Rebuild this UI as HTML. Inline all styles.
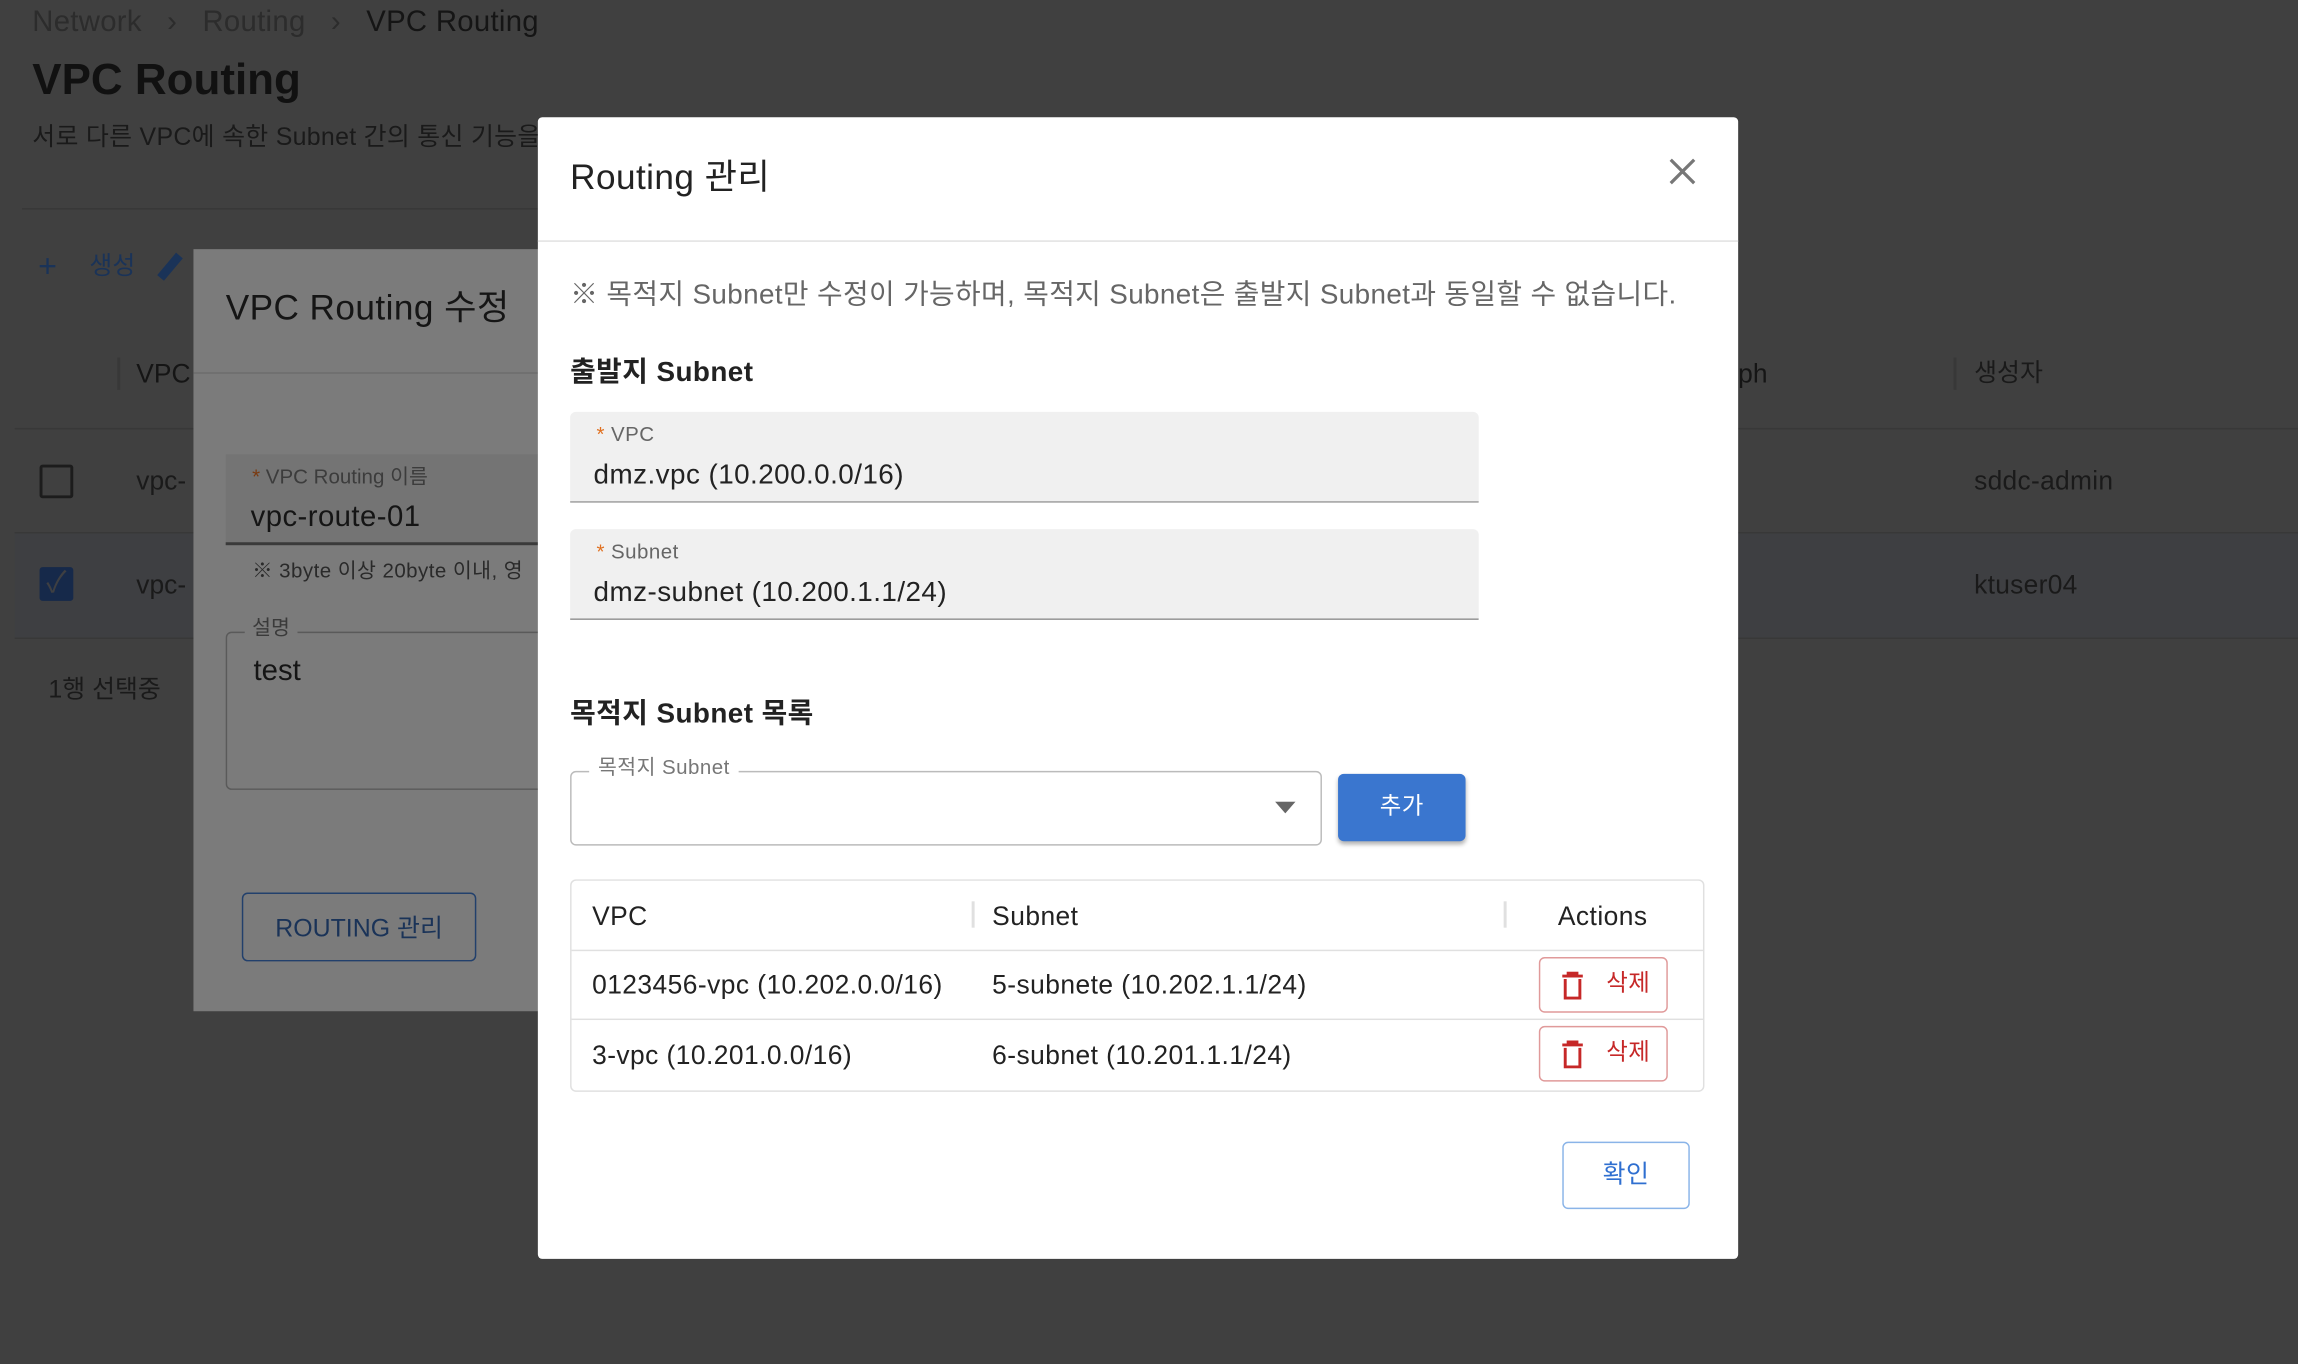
<!DOCTYPE html>
<html><head><meta charset="utf-8"><style>
html,body{margin:0;padding:0;width:2298px;height:1364px;overflow:hidden;background:#404040;}
#s{position:absolute;left:0;top:0;width:1568px;height:931px;transform:scale(1.46556);transform-origin:0 0;font-family:"Liberation Sans","Noto Sans CJK KR",sans-serif;}
.a{position:absolute;white-space:nowrap;line-height:1;}
.m .a{letter-spacing:0.3px;}
</style></head><body><div id="s">
<!-- background page -->
<div class="a" style="left:22px;top:5px;font-size:20px;color:#2c2c2c;letter-spacing:0.2px">Network &nbsp;&nbsp;›&nbsp;&nbsp; Routing &nbsp;&nbsp;›&nbsp;&nbsp; <span style="color:#151515">VPC Routing</span></div>
<div class="a" style="left:22px;top:40px;font-size:30px;font-weight:bold;color:#111">VPC Routing</div>
<div class="a" style="left:22px;top:85px;font-size:17px;color:#1a1a1a;letter-spacing:0.2px">서로 다른 VPC에 속한 Subnet 간의 통신 기능을</div>
<div class="a" style="left:15px;top:142px;width:360px;height:1px;background:#383838"></div>
<div class="a" style="left:26px;top:171px;font-size:22px;color:#1a3358">+</div>
<div class="a" style="left:61px;top:173px;font-size:17px;color:#1a3358">생성</div>
<div class="a" style="left:80px;top:244px;width:2px;height:22px;background:#383838"></div>
<div class="a" style="left:93px;top:246px;font-size:18px;color:#151515">VPC</div>
<div class="a" style="left:1186px;top:246px;font-size:18px;color:#151515">ph</div>
<div class="a" style="left:1333px;top:244px;width:2px;height:22px;background:#383838"></div>
<div class="a" style="left:1347px;top:246px;font-size:17px;color:#1a1a1a">생성자</div>
<div class="a" style="left:10px;top:292px;width:1558px;height:1px;background:#383838"></div>
<div class="a" style="left:10px;top:363px;width:1558px;height:72px;background:#3e3f42"></div>
<div class="a" style="left:10px;top:363px;width:1558px;height:1px;background:#383838"></div>
<div class="a" style="left:10px;top:435px;width:1558px;height:1px;background:#383838"></div>
<div class="a" style="left:27px;top:317px;width:19px;height:19px;border:2px solid #1c1c1c;border-radius:2px"></div>
<div class="a" style="left:27px;top:387px;width:23px;height:23px;background:#16294a;border-radius:2px;color:#3e3f42;font-size:20px;text-align:center;line-height:23px">✓</div>
<div class="a" style="left:93px;top:319px;font-size:18px;color:#1a1a1a">vpc-</div>
<div class="a" style="left:93px;top:390px;font-size:18px;color:#1a1a1a">vpc-</div>
<div class="a" style="left:1347px;top:319px;font-size:18px;color:#1a1a1a;letter-spacing:0.2px">sddc-admin</div>
<div class="a" style="left:1347px;top:390px;font-size:18px;color:#1a1a1a;letter-spacing:0.2px">ktuser04</div>
<div class="a" style="left:33px;top:462px;font-size:17px;color:#1a1a1a">1행 선택중</div>
<div class="a" style="left:113px;top:172px;width:6px;height:20px;background:#1a3358;transform:rotate(40deg)"></div>
<!-- middle dialog -->
<div class="a" style="left:132px;top:170px;width:260px;height:520px;background:#7b7b7b"></div>
<div class="a" style="left:154px;top:199px;font-size:24px;color:#151515;letter-spacing:0.3px">VPC Routing 수정</div>
<div class="a" style="left:132px;top:254px;width:240px;height:1px;background:#6c6c6c"></div>
<div class="a" style="left:154px;top:310px;width:220px;height:60px;background:#747474;border-bottom:2px solid #3a3a3a"></div>
<div class="a" style="left:172px;top:318px;font-size:14px;color:#3c3c3c"><span style="color:#7a3a10">*</span> VPC Routing 이름</div>
<div class="a" style="left:171px;top:343px;font-size:20px;color:#151515;letter-spacing:0.3px">vpc-route-01</div>
<div class="a" style="left:172px;top:382px;font-size:14px;color:#2a2a2a;letter-spacing:0.3px">※ 3byte 이상 20byte 이내, 영</div>
<div class="a" style="left:154px;top:431px;width:220px;height:106px;border:1px solid #5a5a5a;border-radius:4px"></div>
<div class="a" style="left:167px;top:421px;font-size:14px;color:#3a3a3a;background:#7b7b7b;padding:0 5px">설명</div>
<div class="a" style="left:173px;top:448px;font-size:20px;color:#151515">test</div>
<div class="a" style="left:165px;top:609px;border:1px solid #22406c;border-radius:4px;box-sizing:border-box;width:160px;height:47px;font-size:17px;color:#1a3358;text-align:center;line-height:47px">ROUTING 관리</div>
<!-- modal -->
<div class="a m" style="left:367px;top:80px;width:819px;height:779px;background:#fff;border-radius:3px">
 <div class="a" style="left:22px;top:30px;font-size:24px;color:#222">Routing 관리</div>
 <svg class="a" style="left:771px;top:27px" width="20" height="20" viewBox="0 0 20 20"><path d="M2 2L18 18M18 2L2 18" stroke="#777" stroke-width="2.2"/></svg>
 <div class="a" style="left:0;top:84px;width:819px;height:1px;background:#e0e0e0"></div>
 <div class="a" style="left:22px;top:112px;font-size:19px;color:#666;letter-spacing:0.25px">※ 목적지 Subnet만 수정이 가능하며, 목적지 Subnet은 출발지 Subnet과 동일할 수 없습니다.</div>
 <div class="a" style="left:22px;top:165px;font-size:19px;font-weight:bold;color:#222">출발지 Subnet</div>
 <div class="a" style="left:22px;top:201px;width:620px;height:61px;background:#f0f0f0;border-radius:4px 4px 0 0;border-bottom:1px solid #888"></div>
 <div class="a" style="left:40px;top:209px;font-size:14px;color:#666"><span style="color:#e07020">*</span> VPC</div>
 <div class="a" style="left:38px;top:235px;font-size:19px;color:#222">dmz.vpc (10.200.0.0/16)</div>
 <div class="a" style="left:22px;top:281px;width:620px;height:61px;background:#f0f0f0;border-radius:4px 4px 0 0;border-bottom:1px solid #888"></div>
 <div class="a" style="left:40px;top:289px;font-size:14px;color:#666"><span style="color:#e07020">*</span> Subnet</div>
 <div class="a" style="left:38px;top:315px;font-size:19px;color:#222">dmz-subnet (10.200.1.1/24)</div>
 <div class="a" style="left:22px;top:398px;font-size:19px;font-weight:bold;color:#222">목적지 Subnet 목록</div>
 <div class="a" style="left:22px;top:446px;width:511px;height:49px;border:1px solid #bbb;border-radius:4px"></div>
 <div class="a" style="left:35px;top:436px;font-size:14px;color:#777;background:#fff;padding:0 6px">목적지 Subnet</div>
 <svg class="a" style="left:503px;top:467px" width="14" height="8"><path d="M0 0H14L7 8Z" fill="#666"/></svg>
 <div class="a" style="left:546px;top:448px;width:87px;height:46px;background:#3a76cf;border-radius:4px;box-shadow:0 2px 3px rgba(0,0,0,.3);color:#fff;font-size:16px;text-align:center;line-height:46px">추가</div>
 <div class="a" style="left:22px;top:520px;width:772px;height:143px;border:1px solid #e0e0e0;border-radius:4px"></div>
 <div class="a" style="left:37px;top:536px;font-size:18px;color:#222">VPC</div>
 <div class="a" style="left:296px;top:535px;width:2px;height:18px;background:#e0e0e0"></div>
 <div class="a" style="left:310px;top:536px;font-size:18px;color:#222">Subnet</div>
 <div class="a" style="left:659px;top:535px;width:2px;height:18px;background:#e0e0e0"></div>
 <div class="a" style="left:696px;top:536px;font-size:18px;color:#222">Actions</div>
 <div class="a" style="left:23px;top:568px;width:772px;height:1px;background:#e0e0e0"></div>
 <div class="a" style="left:23px;top:615px;width:772px;height:1px;background:#e0e0e0"></div>
 <div class="a" style="left:37px;top:583px;font-size:18px;color:#222">0123456-vpc (10.202.0.0/16)</div>
 <div class="a" style="left:310px;top:583px;font-size:18px;color:#222">5-subnete (10.202.1.1/24)</div>
 <div class="a" style="left:37px;top:631px;font-size:18px;color:#222">3-vpc (10.201.0.0/16)</div>
 <div class="a" style="left:310px;top:631px;font-size:18px;color:#222">6-subnet (10.201.1.1/24)</div>
 <div class="a" style="left:683px;top:573px;width:86px;height:36px;border:1px solid #e09a9a;border-radius:4px"><svg class="a" style="left:14px;top:9px" width="16" height="19" viewBox="0 0 16 19"><path d="M1 3H15M5 3V1H11V3M3 5V18H13V5" fill="none" stroke="#c62828" stroke-width="2"/></svg><div class="a" style="left:45px;top:10px;font-size:16px;color:#c62828">삭제</div></div>
 <div class="a" style="left:683px;top:620px;width:86px;height:36px;border:1px solid #e09a9a;border-radius:4px"><svg class="a" style="left:14px;top:9px" width="16" height="19" viewBox="0 0 16 19"><path d="M1 3H15M5 3V1H11V3M3 5V18H13V5" fill="none" stroke="#c62828" stroke-width="2"/></svg><div class="a" style="left:45px;top:10px;font-size:16px;color:#c62828">삭제</div></div>
 <div class="a" style="left:699px;top:699px;width:85px;height:44px;border:1px solid #8ab4e8;border-radius:4px;color:#2f6fd0;font-size:17px;text-align:center;line-height:44px">확인</div>
</div>
</div></body></html>
